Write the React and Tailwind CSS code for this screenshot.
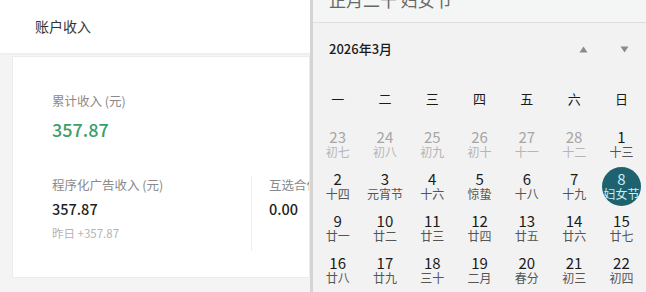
const days = [
  { d: "23", l: "初七", dim: true },
  { d: "24", l: "初八", dim: true },
  { d: "25", l: "初九", dim: true },
  { d: "26", l: "初十", dim: true },
  { d: "27", l: "十一", dim: true },
  { d: "28", l: "十二", dim: true },
  { d: "1", l: "十三" },
  { d: "2", l: "十四" },
  { d: "3", l: "元宵节" },
  { d: "4", l: "十六" },
  { d: "5", l: "惊蛰" },
  { d: "6", l: "十八" },
  { d: "7", l: "十九" },
  { d: "8", l: "妇女节", today: true },
  { d: "9", l: "廿一" },
  { d: "10", l: "廿二" },
  { d: "11", l: "廿三" },
  { d: "12", l: "廿四" },
  { d: "13", l: "廿五" },
  { d: "14", l: "廿六" },
  { d: "15", l: "廿七" },
  { d: "16", l: "廿八" },
  { d: "17", l: "廿九" },
  { d: "18", l: "三十" },
  { d: "19", l: "二月" },
  { d: "20", l: "春分" },
  { d: "21", l: "初三" },
  { d: "22", l: "初四" },
];

const weekdays = ["一", "二", "三", "四", "五", "六", "日"];

function DayCell({ d, l, dim, today }) {
  if (today) {
    return (
      <div className="flex h-[42px] items-center justify-center">
        <div className="flex size-[39px] flex-col items-center justify-center rounded-full bg-[#1e6270] text-[#cdeef3]">
          <span className="text-[15px] leading-[15px]">{d}</span>
          <span className="text-[12px] leading-[15px]">{l}</span>
        </div>
      </div>
    );
  }
  return (
    <div className={`flex h-[42px] flex-col items-center justify-center ${dim ? "text-[#a6a6a6]" : "text-[#1a1a1a]"}`}>
      <span className="text-[15px] leading-[15px]">{d}</span>
      <span className={`text-[12px] leading-[15px] ${dim ? "text-[#b5b5b5]" : "text-[#555]"}`}>{l}</span>
    </div>
  );
}

export default function App() {
  return (
    <div
      className="flex h-[292px] w-[646px] overflow-hidden bg-[#f4f4f4]"
      style={{ fontFamily: '"Noto Sans CJK SC", "Noto Sans", sans-serif' }}
    >
      {/* page behind */}
      <div className="flex w-[310px] shrink-0 flex-col">
        <div className="flex h-[53px] items-center bg-white pl-[35px] text-[14px] text-[#333] shadow-[0_1px_2px_rgba(0,0,0,0.04)]">
          账户收入
        </div>
        <div className="mt-[3px] ml-[12px] flex h-[222px] flex-col overflow-hidden border border-[#ececec] bg-white pl-[39px] pt-[35px]">
          <div className="text-[12.5px] leading-[18px] text-[#8a8a8a]">累计收入 (元)</div>
          <div className="mt-[8px] text-[18px] font-medium leading-[22px] text-[#3aa06c]">357.87</div>
          <div className="mt-[36px] flex">
            <div className="w-[200px] shrink-0 border-r border-[#eeeeee] pb-[10px]">
              <div className="text-[12.5px] leading-[18px] text-[#8a8a8a]">程序化广告收入 (元)</div>
              <div className="mt-[5px] text-[14.5px] font-medium leading-[20px] text-[#222]">357.87</div>
              <div className="mt-[6px] text-[11.5px] leading-[16px] text-[#b4b4b4]">昨日 +357.87</div>
            </div>
            <div className="shrink-0 whitespace-nowrap pl-[17px]">
              <div className="text-[12.5px] leading-[18px] text-[#8a8a8a]">互选合作收入</div>
              <div className="mt-[5px] text-[14.5px] font-medium leading-[20px] text-[#222]">0.00</div>
            </div>
          </div>
        </div>
      </div>

      {/* calendar flyout */}
      <div className="relative z-10 flex flex-1 flex-col border-l-[3px] border-[#d4d4d4] bg-[#f2f2f2]">
        <div className="h-[23px] overflow-hidden border-b border-[#dedede] bg-[#f4f5f5] pl-[16px]">
          <div className="-mt-[13px] text-[17px] leading-[26px] text-[#666]">正月二十 妇女节</div>
        </div>
        <div className="flex h-[52px] items-center pl-[16px] pr-[17px]">
          <div className="text-[13px] font-medium text-[#1a1a1a]">2026年3月</div>
          <div className="ml-auto flex items-center gap-[32px]">
            <svg width="9" height="7" viewBox="0 0 9 7"><path d="M4.5 0.5 L8.5 6.5 L0.5 6.5 Z" fill="#8a8a8a" /></svg>
            <svg width="9" height="7" viewBox="0 0 9 7"><path d="M0.5 0.5 L8.5 0.5 L4.5 6.5 Z" fill="#8a8a8a" /></svg>
          </div>
        </div>
        <div className="grid grid-cols-[repeat(7,47.3px)] pl-[1px]">
          {weekdays.map((w) => (
            <div key={w} className="flex h-[48px] items-center justify-center text-[13px] text-[#1a1a1a]">
              {w}
            </div>
          ))}
          {days.map((x) => (
            <DayCell key={x.d + x.l} {...x} />
          ))}
        </div>
      </div>
    </div>
  );
}
